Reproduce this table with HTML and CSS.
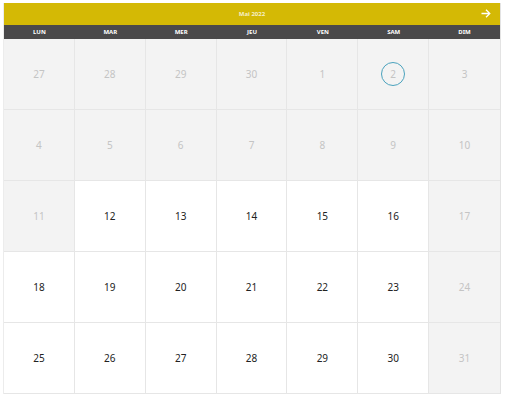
FILE: index.html
```html
<!DOCTYPE html>
<html lang="fr">
<head>
<meta charset="utf-8">
<title>Calendrier</title>
<link rel="stylesheet" href="styles.css">
</head>
<body>
<div class="calendar">
  <div class="header">
    <span class="title">Mai 2022</span>
    <span class="next" aria-label="Mois suivant">
      <svg width="10" height="9" viewBox="0 0 10 9"><path d="M0.5 4.5H9M5 0.8L8.8 4.5L5 8.2" fill="none" stroke="#fff" stroke-width="1.3"/></svg>
    </span>
  </div>
  <div class="weekdays">
    <span>LUN</span><span>MAR</span><span>MER</span><span>JEU</span><span>VEN</span><span>SAM</span><span>DIM</span>
  </div>
  <div class="days">
    <div class="day off">27</div>
    <div class="day off">28</div>
    <div class="day off">29</div>
    <div class="day off">30</div>
    <div class="day off">1</div>
    <div class="day off today"><span class="ring">2</span></div>
    <div class="day off">3</div>
    <div class="day off">4</div>
    <div class="day off">5</div>
    <div class="day off">6</div>
    <div class="day off">7</div>
    <div class="day off">8</div>
    <div class="day off">9</div>
    <div class="day off">10</div>
    <div class="day off">11</div>
    <div class="day">12</div>
    <div class="day">13</div>
    <div class="day">14</div>
    <div class="day">15</div>
    <div class="day">16</div>
    <div class="day off">17</div>
    <div class="day">18</div>
    <div class="day">19</div>
    <div class="day">20</div>
    <div class="day">21</div>
    <div class="day">22</div>
    <div class="day">23</div>
    <div class="day off">24</div>
    <div class="day">25</div>
    <div class="day">26</div>
    <div class="day">27</div>
    <div class="day">28</div>
    <div class="day">29</div>
    <div class="day">30</div>
    <div class="day off">31</div>
  </div>
</div>
</body>
</html>
```
FILE: styles.css
```css
html, body {
  margin: 0;
  padding: 0;
  background: #fff;
}
body {
  font-family: "Noto Sans", "Liberation Sans", sans-serif;
}
.calendar {
  margin: 3px 0 0 3px;
  width: 498px;
  border-right: 1px solid #e3e3e3;
  border-left: 1px solid #ececec;
  box-sizing: border-box;
}
.header {
  height: 22px;
  background: #d4b905;
  display: flex;
  align-items: center;
  justify-content: center;
  position: relative;
}
.title {
  color: #f4efc8;
  font-size: 6px;
  font-weight: bold;
}
.next {
  position: absolute;
  right: 9px;
  top: 6px;
  display: flex;
}
.weekdays {
  height: 14px;
  background: #4a494a;
  display: grid;
  grid-template-columns: repeat(7, 1fr);
  align-items: center;
}
.weekdays span {
  color: #fff;
  font-size: 6px;
  font-weight: bold;
  text-align: center;
}
.days {
  display: grid;
  grid-template-columns: repeat(7, 1fr);
  grid-auto-rows: 71px;
}
.day {
  background: #fff;
  border-right: 1px solid #e6e6e6;
  border-bottom: 1px solid #e6e6e6;
  display: flex;
  align-items: center;
  justify-content: center;
  font-size: 10px;
  color: #222;
}
.day:nth-child(7n) {
  border-right: none;
}
.day.off {
  background: #f3f3f3;
  color: #c4c4c4;
}
.ring {
  width: 22px;
  height: 22px;
  border: 1px solid #4aa2bd;
  border-radius: 50%;
  display: flex;
  align-items: center;
  justify-content: center;
}
```
